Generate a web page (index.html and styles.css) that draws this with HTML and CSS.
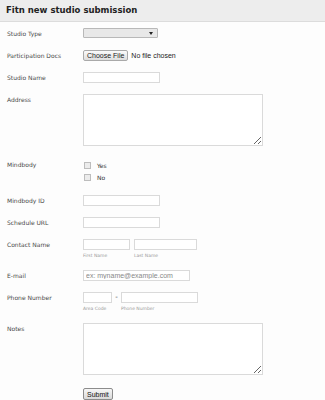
FILE: index.html
```html
<!DOCTYPE html>
<html lang="en">
<head>
    <meta charset="UTF-8">
    <meta name="viewport" content="width=device-width, initial-scale=1.0">
    <title>Fitn new studio submission</title>
    <link rel="stylesheet" href="styles.css">
</head>
<body>
    <div class="header">
        <h1>Fitn new studio submission</h1>
    </div>
    <form class="form" id="studioForm">
        <div class="row">
            <label class="label" for="studioType">Studio Type</label>
            <select id="studioType" class="select"></select>
        </div>
        <div class="row">
            <label class="label" for="docs">Participation Docs</label>
            <input type="file" id="docs" class="file">
        </div>
        <div class="row">
            <label class="label" for="studioName">Studio Name</label>
            <input type="text" id="studioName" class="input short">
        </div>
        <div class="row tall">
            <label class="label" for="address">Address</label>
            <textarea id="address" class="textarea"></textarea>
        </div>
        <div class="row">
            <span class="label">Mindbody</span>
            <div class="checks">
                <label class="check"><input type="checkbox"> Yes</label>
                <label class="check"><input type="checkbox"> No</label>
            </div>
        </div>
        <div class="row">
            <label class="label" for="mindbodyId">Mindbody ID</label>
            <input type="text" id="mindbodyId" class="input short">
        </div>
        <div class="row">
            <label class="label" for="scheduleUrl">Schedule URL</label>
            <input type="text" id="scheduleUrl" class="input short">
        </div>
        <div class="row">
            <label class="label" for="firstName">Contact Name</label>
            <div class="split">
                <div class="part">
                    <input type="text" id="firstName" class="input first">
                    <span class="sub">First Name</span>
                </div>
                <div class="part">
                    <input type="text" id="lastName" class="input last">
                    <span class="sub">Last Name</span>
                </div>
            </div>
        </div>
        <div class="row">
            <label class="label" for="email">E-mail</label>
            <input type="text" id="email" class="input email" placeholder="ex: myname@example.com">
        </div>
        <div class="row">
            <label class="label" for="areaCode">Phone Number</label>
            <div class="split tight">
                <div class="part">
                    <input type="text" id="areaCode" class="input area">
                    <span class="sub">Area Code</span>
                </div>
                <span class="dash">-</span>
                <div class="part">
                    <input type="text" id="phone" class="input phone">
                    <span class="sub">Phone Number</span>
                </div>
            </div>
        </div>
        <div class="row tall">
            <label class="label" for="notes">Notes</label>
            <textarea id="notes" class="textarea"></textarea>
        </div>
        <div class="row">
            <span class="label"></span>
            <button type="submit" class="submit">Submit</button>
        </div>
    </form>
</body>
</html>
```
FILE: styles.css
```css
body {
    font-family: "DejaVu Sans", Verdana, sans-serif;
    background-color: #fdfdfd;
    margin: 0;
    padding: 0;
}

.header {
    height: 21px;
    background-color: #ededed;
    border-bottom: 1px solid #dcdcdc;
}

h1 {
    margin: 0;
    padding-left: 6px;
    font-size: 8.5px;
    line-height: 21px;
    color: #222;
}

.form {
    padding: 6px 0 0 7px;
}

.row {
    display: flex;
    align-items: flex-start;
    margin-bottom: 11px;
}

.row.tall {
    margin-bottom: 13px;
}

.label {
    width: 76px;
    flex: none;
    font-size: 6px;
    line-height: 11px;
    color: #4a4a4a;
}

.input {
    box-sizing: border-box;
    height: 11px;
    margin: 0;
    padding: 0 2px;
    border: 1px solid #dadada;
    background-color: #fff;
    font-family: "Liberation Sans", Arial, sans-serif;
    font-size: 7px;
    outline: none;
}

.input::placeholder {
    color: #888;
}

.short {
    width: 77px;
}

.first {
    width: 47px;
}

.last {
    width: 63px;
}

.email {
    width: 107px;
}

.area {
    width: 29px;
}

.phone {
    width: 77px;
}

.select {
    box-sizing: border-box;
    width: 75px;
    height: 10px;
    margin: 0;
    border: 1px solid #b8b8b8;
    border-radius: 1px;
    appearance: none;
    background: #e8e8e8 url("data:image/svg+xml;utf8,<svg xmlns='http://www.w3.org/2000/svg' width='4' height='3'><path d='M0 0h4L2 3z' fill='%23222'/></svg>") no-repeat right 4px center;
}

.file {
    display: block;
    height: 11px;
    margin: 0;
    font-family: "Liberation Sans", Arial, sans-serif;
    font-size: 7px;
    line-height: 11px;
    color: #222;
}

.file::file-selector-button {
    height: 11px;
    margin-right: 3px;
    padding: 0 3px;
    border: 1px solid #a9a9a9;
    border-radius: 2px;
    background: linear-gradient(#fbfbfb, #dedede);
    font-family: "Liberation Sans", Arial, sans-serif;
    font-size: 7px;
    color: #222;
}

.textarea {
    box-sizing: border-box;
    width: 180px;
    height: 52px;
    margin: 0;
    border: 1px solid #dadada;
    background-color: #fff;
    outline: none;
}

.checks {
    display: flex;
    flex-direction: column;
    padding-bottom: 1px;
}

.check {
    display: flex;
    align-items: center;
    height: 12px;
    font-size: 6px;
    color: #333;
}

.check input {
    appearance: none;
    box-sizing: border-box;
    width: 7px;
    height: 7px;
    margin: 0 6px 0 1px;
    border: 1px solid #bdbdbd;
    background-color: #ececec;
}

.split {
    display: flex;
    align-items: flex-start;
    gap: 4px;
}

.split.tight {
    gap: 2px;
}

.part {
    display: flex;
    flex-direction: column;
}

.sub {
    margin-top: 2px;
    font-size: 4.5px;
    line-height: 7px;
    color: #9a9a9a;
}

.dash {
    width: 5px;
    font-size: 7px;
    line-height: 11px;
    text-align: center;
    color: #444;
}

.submit {
    box-sizing: border-box;
    height: 12px;
    margin: 0;
    padding: 0 3px;
    border: 1px solid #8c8c8c;
    border-radius: 2px;
    background: linear-gradient(#f7f7f7, #d9d9d9);
    font-family: "Liberation Sans", Arial, sans-serif;
    font-size: 7px;
    color: #111;
}
```
